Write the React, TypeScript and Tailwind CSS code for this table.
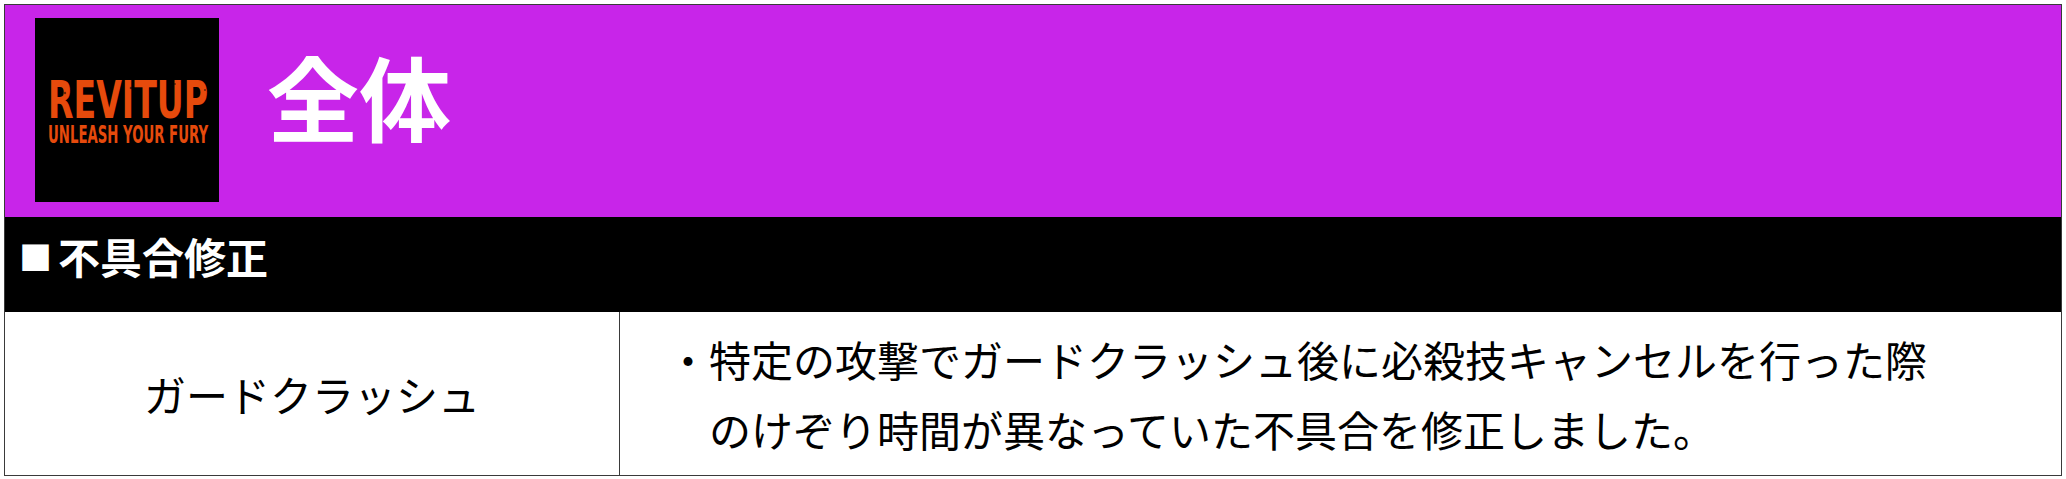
import React from "react";

function Logo() {
  return (
    <svg width="184" height="184" viewBox="0 0 184 184" className="block">
      <rect width="184" height="184" fill="#000" />
      <text
        x="13"
        y="100"
        fill="#e64a0c"
        fontFamily="'DejaVu Sans Condensed', 'Liberation Sans', sans-serif"
        fontWeight="700"
        fontSize="52"
        textLength="160"
        lengthAdjust="spacingAndGlyphs"
      >
        REVITUP
      </text>
      <text
        x="13"
        y="125"
        fill="#e64a0c"
        fontFamily="'DejaVu Sans Condensed', 'Liberation Sans', sans-serif"
        fontWeight="700"
        fontSize="24"
        textLength="160"
        lengthAdjust="spacingAndGlyphs"
      >
        UNLEASH YOUR FURY
      </text>
      <g fill="#000" opacity="0.55">
        <circle cx="30" cy="75" r="1.2" />
        <circle cx="58" cy="90" r="1" />
        <circle cx="96" cy="70" r="1.3" />
        <circle cx="120" cy="85" r="1" />
        <circle cx="150" cy="95" r="1.2" />
        <circle cx="170" cy="72" r="1" />
        <circle cx="80" cy="97" r="0.9" />
        <circle cx="140" cy="66" r="0.9" />
      </g>
    </svg>
  );
}

export default function App() {
  return (
    <div className="m-1 border border-[#3a3a3a] bg-white font-['Noto_Sans_CJK_JP','Noto_Sans',sans-serif]">
      <div className="flex h-[212px] items-start bg-[#c825e9]">
        <div className="ml-[30px] mt-[13px]">
          <Logo />
        </div>
        <div className="ml-[48px] mt-[44px] text-[92px] font-bold leading-none text-white">
          全体
        </div>
      </div>
      <div className="h-[95px] bg-black pl-[14px] pt-[18px]">
        <div className="flex items-center text-[42px] font-bold leading-none text-white">
          <span className="mr-[6px] text-[33px] leading-none">■</span>
          <span>不具合修正</span>
        </div>
      </div>
      <div className="flex h-[163px]">
        <div className="flex w-[615px] items-center justify-center border-r border-[#3a3a3a] text-[42px] leading-none text-black">
          ガードクラッシュ
        </div>
        <div className="flex flex-1 items-center pl-[47px] text-[42px] leading-[70px] text-black">
          <p className="pl-[1em] indent-[-1em]">
            ・特定の攻撃でガードクラッシュ後に必殺技キャンセルを行った際
            <br />
            のけぞり時間が異なっていた不具合を修正しました。
          </p>
        </div>
      </div>
    </div>
  );
}
